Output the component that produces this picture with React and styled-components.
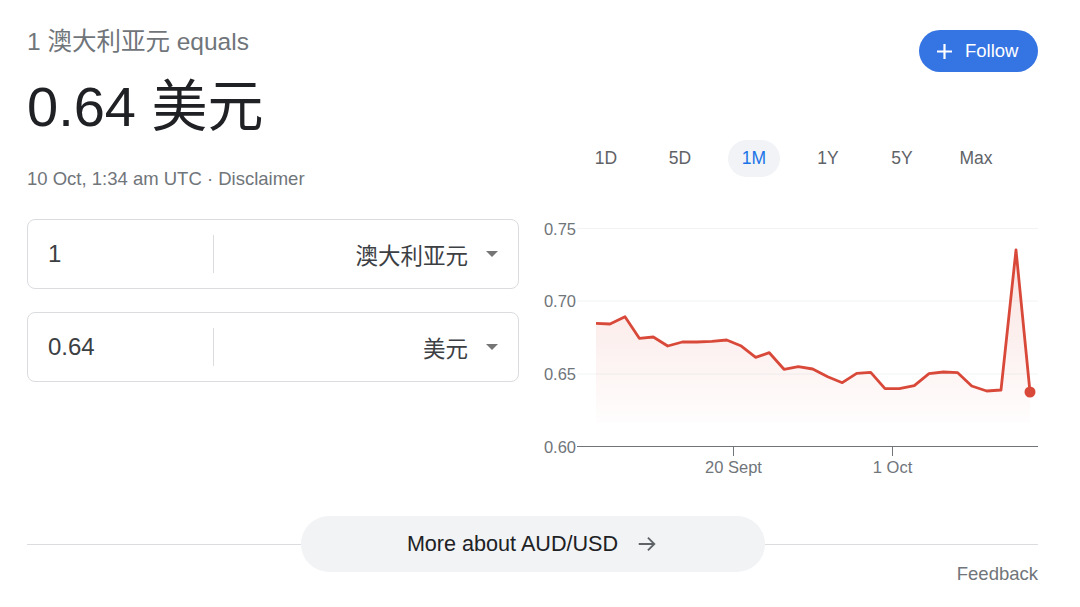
import React from "react";
import styled, { createGlobalStyle } from "styled-components";

const GlobalStyle = createGlobalStyle`
  body {
    margin: 0;
    background: #fff;
    font-family: "Liberation Sans", Arial, "Noto Sans CJK SC", sans-serif;
  }
`;

const Page = styled.div`
  width: 1080px;
  box-sizing: border-box;
  padding: 28px 42px 0 27px;
  color: #202124;
`;

const Top = styled.div`
  display: grid;
  grid-template-columns: 492px 508px;
  column-gap: 11px;
`;

const LeftCol = styled.div`
  display: flex;
  flex-direction: column;
`;

const Title = styled.div`
  font-size: 24.5px;
  line-height: 28px;
  color: #70757a;
`;

const Value = styled.div`
  margin-top: 19px;
  font-size: 56px;
  line-height: 64px;
  color: #202124;
`;

const Stamp = styled.div`
  margin-top: 30px;
  font-size: 18.5px;
  line-height: 20px;
  color: #70757a;
`;

const Converter = styled.div`
  margin-top: 30px;
  display: flex;
  flex-direction: column;
  gap: 23px;
`;

const Field = styled.div`
  display: flex;
  align-items: center;
  height: 70px;
  box-sizing: border-box;
  border: 1px solid #dadce0;
  border-radius: 8px;
`;

const Amount = styled.div`
  width: 185px;
  box-sizing: border-box;
  padding-left: 20px;
  font-size: 24px;
  color: #3c4043;
`;

const Divider = styled.div`
  width: 1px;
  height: 38px;
  background: #dadce0;
`;

const Currency = styled.div`
  flex: 1;
  display: flex;
  align-items: center;
  justify-content: flex-end;
  padding-right: 20px;
  font-size: 22.5px;
  color: #3c4043;
  font-family: "Noto Sans CJK SC", sans-serif;
`;

const Caret = styled.span`
  margin-left: 18px;
  width: 0;
  height: 0;
  border-left: 6px solid transparent;
  border-right: 6px solid transparent;
  border-top: 6px solid #757575;
`;

const RightCol = styled.div`
  display: flex;
  flex-direction: column;
  padding-top: 2px;
`;

const FollowRow = styled.div`
  display: flex;
  justify-content: flex-end;
`;

const FollowButton = styled.button`
  display: flex;
  align-items: center;
  gap: 12px;
  height: 42px;
  width: 119px;
  padding: 0 0 0 17px;
  border: none;
  border-radius: 21px;
  background: #3574e3;
  color: #fff;
  font-family: inherit;
  font-size: 18.5px;
`;

const Ranges = styled.div`
  margin-top: 68px;
  display: flex;
  gap: 22px;
  padding-left: 50px;
`;

const RangeTab = styled.div`
  width: 52px;
  height: 37px;
  border-radius: 19px;
  display: flex;
  align-items: center;
  justify-content: center;
  font-size: 17.5px;
  color: ${(p) => (p.$active ? "#1a73e8" : "#5f6368")};
  background: ${(p) => (p.$active ? "#f1f3f6" : "transparent")};
`;

const Chart = styled.svg`
  margin-top: 33px;
  display: block;
`;

const Footer = styled.div`
  margin-top: 36px;
  display: flex;
  align-items: center;
`;

const Rule = styled.div`
  flex: 1;
  height: 1px;
  background: #dadce0;
`;

const MoreButton = styled.button`
  width: 464px;
  height: 56px;
  border: none;
  border-radius: 28px;
  background: #f1f3f4;
  display: flex;
  align-items: center;
  justify-content: center;
  gap: 18px;
  font-family: inherit;
  font-size: 21.6px;
  color: #202124;
  padding: 0;
`;

const Feedback = styled.div`
  margin-top: -8px;
  text-align: right;
  font-size: 18.5px;
  line-height: 20px;
  color: #70757a;
`;

const points = [
  [66, 113.3], [80, 114], [95, 106.7], [109.3, 128.3], [123.3, 127],
  [137.7, 136], [152.3, 132], [166.7, 132], [181.7, 131.3], [196.7, 130],
  [210.7, 135.7], [225.7, 147.3], [239.3, 142.7], [254, 159.3], [268.3, 156.7],
  [282.7, 159], [297.7, 166.7], [312.3, 172.7], [326.7, 163.3], [340.7, 162.3],
  [355, 178.7], [369.3, 178.7], [384.3, 175.7], [399, 163.7], [413.3, 162],
  [427.7, 162.7], [441.7, 176], [456.7, 181], [471, 180], [486, 40], [500, 182],
];

const yTicks = [
  { label: "0.75", y: 18.5 },
  { label: "0.70", y: 91 },
  { label: "0.65", y: 164 },
];

function PriceChart() {
  const line = points.map((p) => p.join(",")).join(" ");
  const last = points[points.length - 1];
  const area = `${points[0][0]},213 ${line} ${last[0]},213`;
  return (
    <Chart width="508" height="270" viewBox="0 0 508 270">
      <defs>
        <linearGradient id="fill" x1="0" y1="0" x2="0" y2="1">
          <stop offset="0" stopColor="#d9493a" stopOpacity="0.16" />
          <stop offset="1" stopColor="#d9493a" stopOpacity="0.01" />
        </linearGradient>
      </defs>
      {yTicks.map((t) => (
        <g key={t.label}>
          <line x1="47" x2="508" y1={t.y} y2={t.y} stroke="#f1f3f4" strokeWidth="1" />
          <text x="46" y={t.y + 6} textAnchor="end" fontSize="16.5" fill="#70757a" fontFamily="Liberation Sans, Arial, sans-serif">
            {t.label}
          </text>
        </g>
      ))}
      <text x="46" y={242.5} textAnchor="end" fontSize="16.5" fill="#70757a" fontFamily="Liberation Sans, Arial, sans-serif">
        0.60
      </text>
      <polygon points={area} fill="url(#fill)" />
      <polyline points={line} fill="none" stroke="#d9493a" strokeWidth="2.8" strokeLinejoin="round" />
      <circle cx={last[0]} cy={last[1]} r="5.5" fill="#d9493a" />
      <line x1="47" x2="508" y1="236.5" y2="236.5" stroke="#70757a" strokeWidth="1" />
      <line x1="203.5" x2="203.5" y1="236.5" y2="246" stroke="#70757a" strokeWidth="1" />
      <line x1="362.5" x2="362.5" y1="236.5" y2="246" stroke="#70757a" strokeWidth="1" />
      <text x="203.5" y="263" textAnchor="middle" fontSize="16.5" fill="#70757a" fontFamily="Liberation Sans, Arial, sans-serif">
        20 Sept
      </text>
      <text x="362.5" y="263" textAnchor="middle" fontSize="16.5" fill="#70757a" fontFamily="Liberation Sans, Arial, sans-serif">
        1 Oct
      </text>
    </Chart>
  );
}

const ranges = ["1D", "5D", "1M", "1Y", "5Y", "Max"];

export default function App() {
  return (
    <Page>
      <GlobalStyle />
      <Top>
        <LeftCol>
          <Title>1 澳大利亚元 equals</Title>
          <Value>0.64 美元</Value>
          <Stamp>10 Oct, 1:34 am UTC · Disclaimer</Stamp>
          <Converter>
            <Field>
              <Amount>1</Amount>
              <Divider />
              <Currency>
                澳大利亚元
                <Caret />
              </Currency>
            </Field>
            <Field>
              <Amount>0.64</Amount>
              <Divider />
              <Currency>
                美元
                <Caret />
              </Currency>
            </Field>
          </Converter>
        </LeftCol>
        <RightCol>
          <FollowRow>
            <FollowButton>
              <svg width="17" height="17" viewBox="0 0 17 17">
                <path d="M8.5 1v15M1 8.5h15" stroke="#fff" strokeWidth="2.2" fill="none" />
              </svg>
              Follow
            </FollowButton>
          </FollowRow>
          <Ranges>
            {ranges.map((r) => (
              <RangeTab key={r} $active={r === "1M"}>
                {r}
              </RangeTab>
            ))}
          </Ranges>
          <PriceChart />
        </RightCol>
      </Top>
      <Footer>
        <Rule />
        <MoreButton>
          More about AUD/USD
          <svg width="22" height="22" viewBox="0 0 24 24">
            <path d="M3 12h17M13 5l7 7-7 7" stroke="#5f6368" strokeWidth="2" fill="none" />
          </svg>
        </MoreButton>
        <Rule />
      </Footer>
      <Feedback>Feedback</Feedback>
    </Page>
  );
}
